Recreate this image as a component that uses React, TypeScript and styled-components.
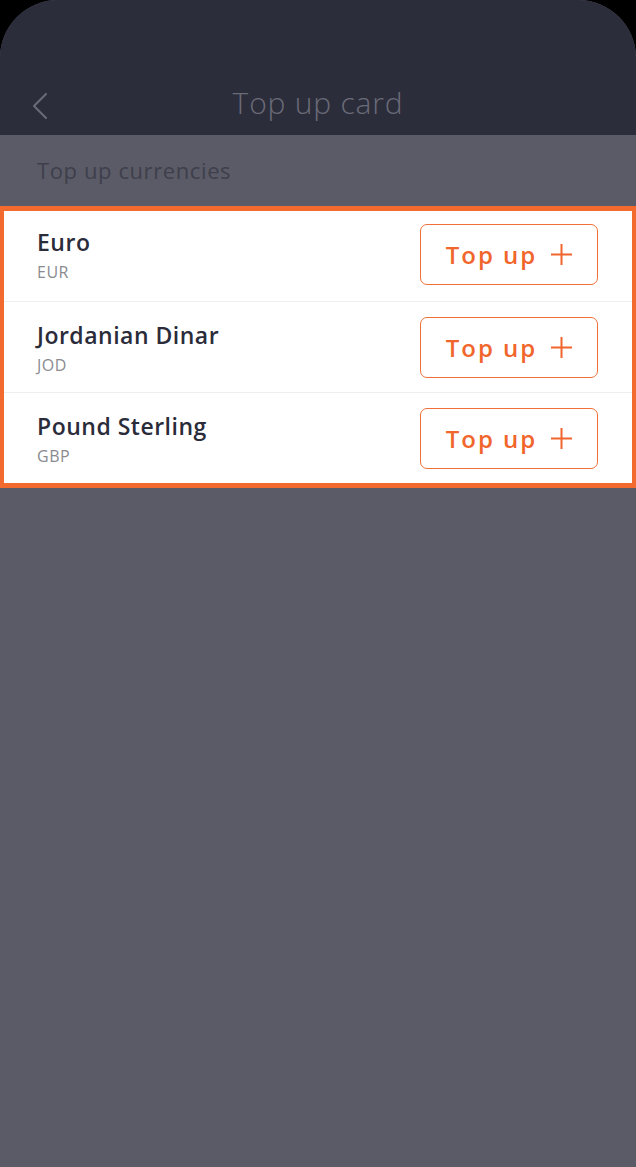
import React from 'react';
import styled, { createGlobalStyle } from 'styled-components';

const GlobalStyle = createGlobalStyle`
  html, body {
    margin: 0;
    padding: 0;
    background: #000;
  }
  * {
    box-sizing: border-box;
  }
`;

const Screen = styled.div`
  min-height: 1167px;
  background: #5b5b67;
  border-radius: 58px 58px 0 0;
  overflow: hidden;
  font-family: 'Open Sans', 'Noto Sans', sans-serif;
  display: flex;
  flex-direction: column;
`;

const Header = styled.header`
  height: 135px;
  background: #2c2d3b;
  display: grid;
  grid-template-columns: 80px 1fr 80px;
  align-items: end;
  padding-bottom: 14px;
`;

const BackButton = styled.button`
  background: none;
  border: none;
  padding: 0 0 0 32px;
  height: 30px;
  display: flex;
  align-items: center;
  cursor: pointer;
`;

const Title = styled.h1`
  margin: 0;
  text-align: center;
  font-size: 30px;
  font-weight: 300;
  color: #6a6b78;
  letter-spacing: 0.8px;
  line-height: 36px;
`;

const SectionLabel = styled.div`
  height: 71px;
  padding: 20px 37px 0;
  font-size: 22px;
  font-weight: 400;
  color: #3e3f4b;
  letter-spacing: 0.6px;
`;

const List = styled.ul`
  margin: 0;
  padding: 0;
  list-style: none;
  background: #fff;
  border: solid #f26a2e;
  border-width: 5px 4px;
`;

const Row = styled.li<{ $first?: boolean }>`
  height: ${(p) => (p.$first ? 90 : 91)}px;
  display: flex;
  align-items: center;
  justify-content: space-between;
  padding: 0 34px ${(p) => (p.$first ? 4 : 0)}px 33px;
  border-top: ${(p) => (p.$first ? 'none' : '1px solid #efefef')};
`;

const Names = styled.div`
  display: flex;
  flex-direction: column;
  gap: 3px;
`;

const Name = styled.span`
  font-size: 23px;
  font-weight: 600;
  color: #2b2c3a;
  letter-spacing: 0.5px;
`;

const Code = styled.span`
  font-size: 16px;
  color: #8a8a8f;
  letter-spacing: 0.5px;
`;

const TopUpButton = styled.button`
  width: 178px;
  height: 61px;
  background: #fff;
  border: 1.5px solid #f0703a;
  border-radius: 7px;
  color: #f0662c;
  font-family: inherit;
  font-size: 24px;
  font-weight: 600;
  letter-spacing: 2px;
  display: flex;
  align-items: center;
  justify-content: center;
  gap: 14px;
  cursor: pointer;
`;

const currencies = [
  { name: 'Euro', code: 'EUR' },
  { name: 'Jordanian Dinar', code: 'JOD' },
  { name: 'Pound Sterling', code: 'GBP' },
];

const Chevron = () => (
  <svg width="16" height="26" viewBox="0 0 16 26" fill="none">
    <path d="M14 1 L2 13 L14 25" stroke="#6a6b78" strokeWidth="2" strokeLinecap="round" strokeLinejoin="round" />
  </svg>
);

const Plus = () => (
  <svg width="21" height="21" viewBox="0 0 21 21" fill="none">
    <path d="M10.5 0 V21 M0 10.5 H21" stroke="#f0662c" strokeWidth="2" />
  </svg>
);

export default function App() {
  return (
    <>
      <GlobalStyle />
      <Screen>
        <Header>
          <BackButton aria-label="Back">
            <Chevron />
          </BackButton>
          <Title>Top up card</Title>
          <span />
        </Header>
        <SectionLabel>Top up currencies</SectionLabel>
        <List>
          {currencies.map((c, i) => (
            <Row key={c.code} $first={i === 0}>
              <Names>
                <Name>{c.name}</Name>
                <Code>{c.code}</Code>
              </Names>
              <TopUpButton>
                Top up <Plus />
              </TopUpButton>
            </Row>
          ))}
        </List>
      </Screen>
    </>
  );
}
